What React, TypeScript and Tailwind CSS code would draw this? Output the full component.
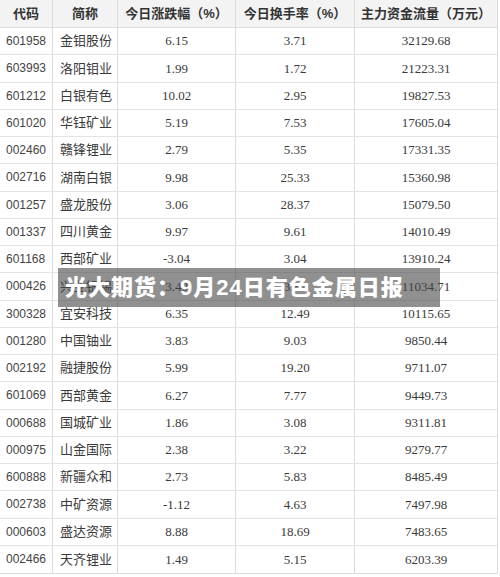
import React from "react";

const rows: [string, string, string, string, string][] = [
  ["601958", "金钼股份", "6.15", "3.71", "32129.68"],
  ["603993", "洛阳钼业", "1.99", "1.72", "21223.31"],
  ["601212", "白银有色", "10.02", "2.95", "19827.53"],
  ["601020", "华钰矿业", "5.19", "7.53", "17605.04"],
  ["002460", "赣锋锂业", "2.79", "5.35", "17331.35"],
  ["002716", "湖南白银", "9.98", "25.33", "15360.98"],
  ["001257", "盛龙股份", "3.06", "28.37", "15079.50"],
  ["001337", "四川黄金", "9.97", "9.61", "14010.49"],
  ["601168", "西部矿业", "-3.04", "3.04", "13910.24"],
  ["000426", "兴业银锡", "3.49", "3.87", "11034.71"],
  ["300328", "宜安科技", "6.35", "12.49", "10115.65"],
  ["001280", "中国铀业", "3.83", "9.03", "9850.44"],
  ["002192", "融捷股份", "5.99", "19.20", "9711.07"],
  ["601069", "西部黄金", "6.27", "7.77", "9449.73"],
  ["000688", "国城矿业", "1.86", "3.08", "9311.81"],
  ["000975", "山金国际", "2.38", "3.22", "9279.77"],
  ["600888", "新疆众和", "2.73", "5.83", "8485.49"],
  ["002738", "中矿资源", "-1.12", "4.63", "7497.98"],
  ["000603", "盛达资源", "8.88", "18.69", "7483.65"],
  ["002466", "天齐锂业", "1.49", "5.15", "6203.39"],
];

const sans = "font-['Liberation_Sans','Noto_Sans_CJK_SC',sans-serif]";
const serif = "font-['Liberation_Serif','Noto_Sans_CJK_SC',serif]";

export default function App() {
  return (
    <div className="relative w-[500px] h-[577px] bg-white overflow-hidden">
      <div className="w-[498px] border-b border-r border-[#dcdcdc]">
        <div className={`flex h-[28px] bg-[#f3f3f3] border-b border-[#dcdcdc] text-[13px] font-bold text-[#333] ${sans}`}>
          <div className="w-[53px] flex items-center justify-center border-r border-[#dcdcdc]">代码</div>
          <div className="w-[65px] flex items-center justify-center border-r border-[#dcdcdc]">简称</div>
          <div className="w-[118px] flex items-center justify-center border-r border-[#dcdcdc]">今日涨跌幅（%）</div>
          <div className="w-[119px] flex items-center justify-center border-r border-[#dcdcdc]">今日换手率（%）</div>
          <div className="flex-1 flex items-center justify-center">主力资金流量（万元）</div>
        </div>
        {rows.map((r, i) => (
          <div
            key={r[0]}
            className={`flex h-[27.25px] text-[#3a3a3a] ${i < rows.length - 1 ? "border-b border-[#e3e3e3]" : ""}`}
          >
            <div className={`w-[53px] flex items-center pl-[6px] text-[12px] text-[#444] border-r border-[#dcdcdc] ${sans}`}>{r[0]}</div>
            <div className={`w-[65px] flex items-center pl-[7px] text-[13px] border-r border-[#dcdcdc] ${sans}`}>{r[1]}</div>
            <div className={`w-[118px] flex items-center justify-center text-[13px] border-r border-[#dcdcdc] ${serif}`}>{r[2]}</div>
            <div className={`w-[119px] flex items-center justify-center text-[13px] border-r border-[#dcdcdc] ${serif}`}>{r[3]}</div>
            <div className={`flex-1 flex items-center justify-center text-[13px] ${serif}`}>{r[4]}</div>
          </div>
        ))}
      </div>
      <div className="absolute left-[58px] top-[268px] w-[382px] h-[39px] bg-[rgba(70,70,70,0.6)] flex items-center pl-[7px]">
        <span className={`text-white font-black text-[22px] tracking-[1px] ${sans}`}>光大期货：9月24日有色金属日报</span>
      </div>
    </div>
  );
}
